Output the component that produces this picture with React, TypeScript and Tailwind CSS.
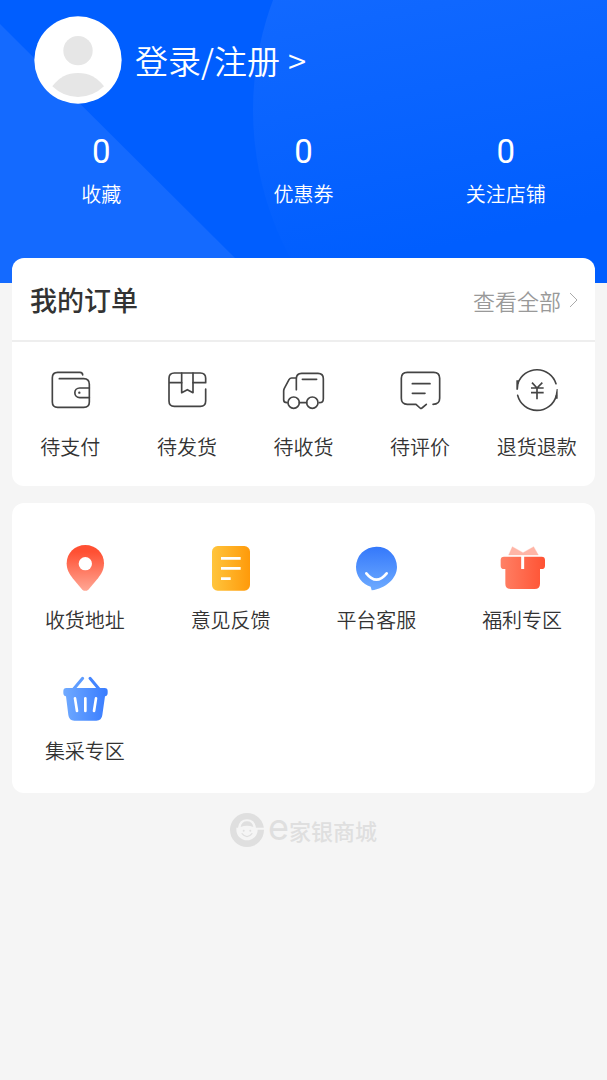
import type { ReactNode } from "react"

type Entry = {
  label: string
  icon: ReactNode
}

type Stat = {
  label: string
  value: number
}

const stats: Stat[] = [
  { label: "收藏", value: 0 },
  { label: "优惠券", value: 0 },
  { label: "关注店铺", value: 0 },
]

const LineIcon = ({ children }: { children: ReactNode }) => (
  <svg
    viewBox="0 0 144 144"
    className="mb-[5px] h-12 w-12"
    fill="none"
    stroke="#444444"
    strokeWidth="5"
    strokeLinecap="round"
    strokeLinejoin="round"
    aria-hidden="true"
  >
    {children}
  </svg>
)

const ColorIcon = ({ children }: { children: ReactNode }) => (
  <svg viewBox="0 0 144 144" className="h-12 w-12" fill="none" aria-hidden="true">
    {children}
  </svg>
)

const orderEntries: Entry[] = [
  {
    label: "待支付",
    icon: (
      <LineIcon>
        <path d="M110 27q0-8-8-8H35q-16 0-16 16v73q0 16 16 16h78q17 0 17-16V55q0-17-17-17H40" />
        <path d="M130 66H101a14.500 14.500 0 0 0 0 29h29" />
        <circle cx="100" cy="80" r="3.500" fill="#444444" stroke="none" />
      </LineIcon>
    ),
  },
  {
    label: "待发货",
    icon: (
      <LineIcon>
        <path d="M128 69v36q0 16-16 16H34q-16 0-16-16V37q0-16 16-16h78q16 0 16 16v13H90M18 50h38" />
        <path d="M56 21v59l17-9 17 9V21" />
      </LineIcon>
    ),
  },
  {
    label: "待收货",
    icon: (
      <LineIcon>
        <path d="M52 71V38q0-16 16-16h49q16 0 16 16v60q0 12-12 12" />
        <path d="M52 36H38q-5 0-8 5L16 67q-2 4-2 8v27q0 8 10 8M61 110h22M70 40h43" />
        <circle cx="44" cy="110" r="17" />
        <circle cx="100" cy="110" r="17" />
      </LineIcon>
    ),
  },
  {
    label: "待评价",
    icon: (
      <LineIcon>
        <path d="M111 115q20 0 20-18V37q0-18-18-18H34q-18 0-18 18v60q0 18 18 18h26l12 11q3 3 6 0l13-11" />
        <path d="M49 53h53M49 82h38" />
      </LineIcon>
    ),
  },
  {
    label: "退货退款",
    icon: (
      <LineIcon>
        <path d="M15 52a60 60 0 0 1 114 1M14 88a60 60 0 0 0 116 1" />
        <path d="M10 43h8l-3 28h-5zM134 69h-3l-5 29h8z" fill="#444444" stroke="none" />
        <path d="M57 50l15 16 16-16M54 66h38M54 80h38M72 66v34" strokeLinecap="butt" />
      </LineIcon>
    ),
  },
]

const serviceEntries: Entry[] = [
  {
    label: "收货地址",
    icon: (
      <ColorIcon>
        <defs>
          <linearGradient id="pin" x1="0" y1="0" x2="0" y2="1">
            <stop offset="0.15" stopColor="#ff5033" />
            <stop offset="1" stopColor="#ffa795" />
          </linearGradient>
        </defs>
        <path
          d="M73 3c31 0 56 24 56 55 0 19-8 32-18 45l-29 34q-9 7-18 0l-29-34C25 90 17 77 17 58 17 27 42 3 73 3z"
          fill="url(#pin)"
        />
        <circle cx="73" cy="59" r="20" fill="#ffffff" />
      </ColorIcon>
    ),
  },
  {
    label: "意见反馈",
    icon: (
      <ColorIcon>
        <defs>
          <linearGradient id="note" x1="0" y1="0" x2="1" y2="0">
            <stop offset="0" stopColor="#ffc53d" />
            <stop offset="1" stopColor="#ff9a0a" />
          </linearGradient>
        </defs>
        <rect x="15" y="6" width="114" height="134" rx="17" fill="url(#note)" />
        <path d="M42 43h59M42 73h59M42 104h29" stroke="#ffffff" strokeWidth="8" />
      </ColorIcon>
    ),
  },
  {
    label: "平台客服",
    icon: (
      <ColorIcon>
        <defs>
          <linearGradient id="chat" x1="0" y1="0" x2="0" y2="1">
            <stop offset="0" stopColor="#3478fb" />
            <stop offset="1" stopColor="#6eabff" />
          </linearGradient>
        </defs>
        <path
          d="M73 8a61 61 0 0 1 62 61c0 34-34 65-76 70l-3-11A61 61 0 0 1 12 69 61 61 0 0 1 73 8z"
          fill="url(#chat)"
        />
        <path d="M43 88q30 38 61 0" stroke="#ffffff" strokeWidth="8" strokeLinecap="round" />
      </ColorIcon>
    ),
  },
  {
    label: "福利专区",
    icon: (
      <ColorIcon>
        <defs>
          <linearGradient id="gift" x1="0" y1="0" x2="1" y2="0">
            <stop offset="0" stopColor="#ff8166" />
            <stop offset="1" stopColor="#ff5233" />
          </linearGradient>
        </defs>
        <path d="M43 8l32 18 32-18 14 25H32z" fill="#ffb5a6" stroke="#ffb5a6" strokeLinejoin="round" />
        <path
          d="M18 38h113q10 0 10 10v17q0 10-10 10h-5v44q0 16-16 16H38q-16 0-16-16V75h-4q-10 0-10-10V48q0-10 10-10z"
          fill="url(#gift)"
        />
        <path d="M74 36v39" stroke="#ffffff" strokeWidth="9" />
      </ColorIcon>
    ),
  },
  {
    label: "集采专区",
    icon: (
      <ColorIcon>
        <defs>
          <linearGradient id="basket" x1="0" y1="0" x2="1" y2="0">
            <stop offset="0" stopColor="#70aaff" />
            <stop offset="1" stopColor="#387cff" />
          </linearGradient>
        </defs>
        <path d="M65 10L38 42" stroke="#5f9dff" strokeWidth="9" strokeLinecap="round" />
        <path d="M87 10l27 32" stroke="#4485ff" strokeWidth="9" strokeLinecap="round" />
        <path
          d="M16 39h115q9 0 9 9v6q0 9-8 10l-8 56q-2 17-18 17H40q-16 0-18-17l-7-56q-8-1-8-10v-6q0-9 9-9z"
          fill="url(#basket)"
        />
        <path
          d="M42 70l6 38M73 70v38M105 70l-6 38"
          stroke="#ffffff"
          strokeWidth="8"
          strokeLinecap="round"
        />
      </ColorIcon>
    ),
  },
]

const HeaderBackdrop = () => (
  <svg
    viewBox="0 0 607 283"
    preserveAspectRatio="none"
    className="absolute inset-0 h-full w-full"
    aria-hidden="true"
  >
    <defs>
      <linearGradient id="glow" x1="0" y1="0" x2="0.2" y2="1">
        <stop offset="0.25" stopColor="#146aff" />
        <stop offset="0.75" stopColor="#005eff" />
      </linearGradient>
    </defs>
    <path d="M0 24L235 258v25H0z" fill="#146aff" />
    <circle cx="565" cy="110" r="312" fill="url(#glow)" />
  </svg>
)

const Avatar = () => (
  <svg viewBox="0 0 264 264" className="h-[88px] w-[88px]" role="img" aria-label="头像">
    <circle cx="132" cy="132" r="131" fill="#ffffff" />
    <circle cx="132" cy="104" r="44" fill="#e6e6e6" />
    <path d="M55 211q29-40 77-40t78 40q-34 32-78 32t-77-32z" fill="#e6e6e6" />
  </svg>
)

const EntryButton = ({ label, icon }: Entry) => (
  <button type="button" className="flex cursor-pointer flex-col items-center">
    {icon}
    <span className="mt-3 text-xl leading-8">{label}</span>
  </button>
)

const BrandMark = () => (
  <svg viewBox="0 0 102 102" className="h-[34px] w-[34px]" fill="none" aria-hidden="true">
    <circle cx="51" cy="51" r="51" fill="#dfdfdf" />
    <path d="M24 44q4-25 27-25t27 25h24v6H83a32 32 0 0 1-64 0v-6z" fill="#f5f5f5" />
    <path d="M32 42q3-17 19-17t19 17q-19-7-38 0z" fill="#dfdfdf" />
    <circle cx="41" cy="53" r="3" fill="#dfdfdf" />
    <circle cx="61" cy="53" r="3" fill="#dfdfdf" />
    <path d="M36 62q15 18 30 0" stroke="#dfdfdf" strokeWidth="4" strokeLinecap="round" />
  </svg>
)

const App = () => {
  return (
    <div className="min-h-screen bg-[#f5f5f5] font-['Noto_Sans_CJK_SC',sans-serif] font-[350] text-[#333333]">
      {/* Profile header */}
      <header className="relative bg-[#005eff] pt-4 pb-[73px] text-white">
        <HeaderBackdrop />
        <div className="relative">
          <a href="#login" className="ml-[34px] inline-flex items-center gap-[13px] align-top">
            <Avatar />
            <span className="flex items-center gap-2 text-[33px] leading-[48px]">
              <span>登录/注册</span>
              <span>&gt;</span>
            </span>
          </a>
          <div className="mt-[22px] grid grid-cols-3">
            {stats.map((stat) => (
              <a key={stat.label} href="#stat" className="flex flex-col items-center">
                <span className="font-['Roboto',sans-serif] text-[33px] leading-[52px] font-normal">
                  {stat.value}
                </span>
                <span className="text-xl leading-8">{stat.label}</span>
              </a>
            ))}
          </div>
        </div>
      </header>

      <main className="relative -mt-[25px] flex flex-col gap-[17px] px-3">
        {/* Orders */}
        <section className="rounded-xl bg-white pb-[23px]">
          <div className="flex items-center justify-between border-b-2 border-[#eeeeee] pt-[22px] pr-4 pb-5 pl-[18px]">
            <h2 className="text-[27px] leading-10 font-medium">我的订单</h2>
            <a href="#orders" className="flex items-center gap-2 text-[22px] leading-10 text-[#999999]">
              查看全部
              <svg viewBox="0 0 10 16" className="h-4 w-[10px]" fill="none" stroke="#aaaaaa" aria-hidden="true">
                <path d="M1 1l7 7-7 7" />
              </svg>
            </a>
          </div>
          <div className="grid grid-cols-5 pt-6">
            {orderEntries.map((entry) => (
              <EntryButton key={entry.label} {...entry} />
            ))}
          </div>
        </section>

        {/* Services */}
        <section className="grid grid-cols-4 gap-y-[39px] rounded-xl bg-white pt-[41px] pb-[26px]">
          {serviceEntries.map((entry) => (
            <EntryButton key={entry.label} {...entry} />
          ))}
        </section>
      </main>

      <footer className="flex items-center justify-center gap-1 pt-4 text-[#dfdfdf]">
        <BrandMark />
        <p className="flex items-baseline leading-10">
          <span className="font-['Inter',sans-serif] text-[36px] leading-none font-normal">e</span>
          <span className="text-[22px] font-medium">家银商城</span>
        </p>
      </footer>
    </div>
  )
}

export default App
